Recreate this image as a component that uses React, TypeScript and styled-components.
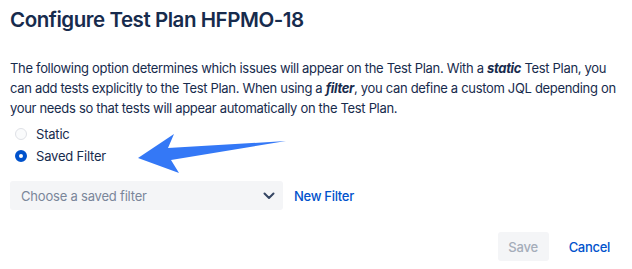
import styled, { createGlobalStyle } from "styled-components";

const GlobalStyle = createGlobalStyle`
    body {
        margin: 0;
        background: #ffffff;
        font-family: Inter, "Noto Sans", sans-serif;
        color: #172b4d;
    }
`;

function App() {
    const options = [
        { label: 'Static', checked: false },
        { label: 'Saved Filter', checked: true },
    ]

    return (
        <Dialog>
            <GlobalStyle />
            <Title>Configure Test Plan HFPMO-18</Title>
            <Description>
                The following option determines which issues will appear on the Test Plan. With a <em>static</em> Test Plan, you<br />
                can add tests explicitly to the Test Plan. When using a <em>filter</em>, you can define a custom JQL depending on<br />
                your needs so that tests will appear automatically on the Test Plan.
            </Description>
            <RadioArea>
                <RadioGroup>
                    {options.map((option) => (
                        <RadioRow key={option.label}>
                            <RadioDot checked={option.checked} />
                            {option.label}
                        </RadioRow>
                    ))}
                </RadioGroup>
                <Arrow width="160" height="50" viewBox="130 125 160 50">
                    <polygon points="138,155 174,131 168,145 286,138 171,157 179,170" fill="#3478f6" />
                </Arrow>
            </RadioArea>
            <FilterRow>
                <Select>
                    <span>Choose a saved filter</span>
                    <svg width="12" height="8" viewBox="0 0 12 8">
                        <path d="M1.5 1.5 L6 6 L10.5 1.5" stroke="#344563" strokeWidth="2" fill="none" strokeLinecap="round" strokeLinejoin="round" />
                    </svg>
                </Select>
                <LinkButton>New Filter</LinkButton>
            </FilterRow>
            <Footer>
                <SaveButton disabled>Save</SaveButton>
                <LinkButton>Cancel</LinkButton>
            </Footer>
        </Dialog>
    )
}


// Styling
const Dialog = styled.div`
    width: 632px;
    height: 269px;
    box-sizing: border-box;
    padding: 6px 10px 0 10px;
    display: flex;
    flex-direction: column;
`;

const Title = styled.h1`
    margin: 0;
    font-size: 20.5px;
    font-weight: 600;
    line-height: 28px;
    letter-spacing: -0.45px;
    color: #172b4d;
`;

const Description = styled.p`
    margin: 24px 0 0 0;
    font-size: 13px;
    line-height: 20px;
    letter-spacing: -0.32px;
    color: #172b4d;
    white-space: nowrap;

    em {
        font-weight: 700;
    }
`;

const RadioArea = styled.div`
    position: relative;
    margin-top: 6px;
`;

const RadioGroup = styled.div`
    display: flex;
    flex-direction: column;
    gap: 2px;
`;

const RadioRow = styled.label`
    display: flex;
    align-items: center;
    gap: 9px;
    height: 20px;
    padding-left: 5px;
    font-size: 13px;
    letter-spacing: -0.2px;
    color: #172b4d;
`;

const RadioDot = styled.span<{ checked: boolean }>`
    width: 12px;
    height: 12px;
    border-radius: 50%;
    box-sizing: border-box;
    background: ${(p) => (p.checked ? '#ffffff' : '#fafbfc')};
    border: ${(p) => (p.checked ? '4px solid #0052cc' : '1.5px solid #dfe1e6')};
`;

const Arrow = styled.svg`
    position: absolute;
    left: 120px;
    top: 4px;
`;

const FilterRow = styled.div`
    display: flex;
    align-items: center;
    gap: 11px;
    margin-top: 15px;
`;

const Select = styled.div`
    width: 273px;
    height: 29px;
    box-sizing: border-box;
    padding: 0 8px 0 11px;
    display: flex;
    align-items: center;
    justify-content: space-between;
    background: #f4f5f7;
    border-radius: 3px;
    font-size: 13px;
    letter-spacing: -0.2px;
    color: #7a869a;
`;

const LinkButton = styled.button`
    border: none;
    background: none;
    padding: 0;
    font-family: inherit;
    font-size: 13px;
    font-weight: 500;
    letter-spacing: -0.3px;
    color: #0052cc;
    cursor: pointer;
`;

const Footer = styled.div`
    display: flex;
    justify-content: flex-end;
    align-items: center;
    gap: 20px;
    margin-top: 22px;
    padding-right: 12px;
`;

const SaveButton = styled.button`
    width: 51px;
    height: 29px;
    border: none;
    border-radius: 3px;
    background: #f4f5f7;
    font-family: inherit;
    font-size: 13px;
    font-weight: 500;
    letter-spacing: -0.2px;
    color: #a5adba;
`;

export default App;
